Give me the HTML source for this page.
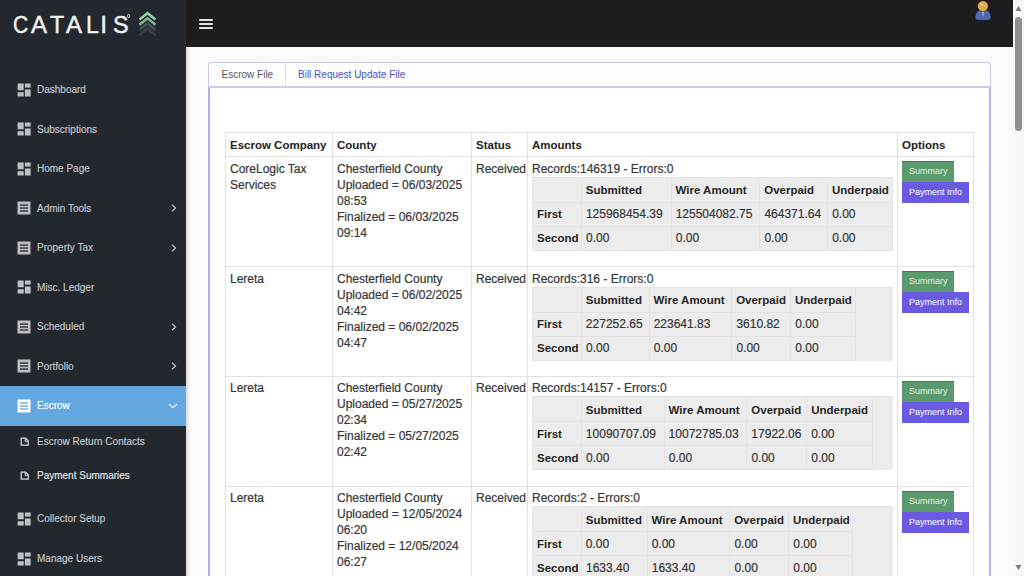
<!DOCTYPE html>
<html><head><meta charset="utf-8">
<style>
*{margin:0;padding:0;box-sizing:border-box}
html,body{width:1024px;height:576px;overflow:hidden;background:#fafafa;font-family:"Liberation Sans",sans-serif}
#side{position:absolute;left:0;top:0;width:186px;height:576px;background:#23282f;box-shadow:inset -2px 0 0 #272a30}
#top{position:absolute;left:186px;top:0;width:827px;height:47px;background:#1d1d20}
#sb{position:absolute;left:1013px;top:0;width:11px;height:576px;background:#f7f7f7}
.item{position:absolute;left:0;width:186px;height:40px;color:#c6c8cc;font-size:10px}
.item .t{position:absolute;left:37px;top:0.5px;line-height:40px;white-space:nowrap;-webkit-text-stroke:0.15px currentColor}
.item svg{position:absolute}
.active{background:#63a7e1;color:#fff}
#box{position:absolute;left:208px;top:62px;width:783px;height:600px}
#tabs{position:absolute;left:0;top:0;width:783px;height:26px;border:1.5px solid #cac6e6;border-bottom:2px solid #cfcbe6;border-radius:3px 3px 0 0;background:#fdfdfd}
#panel{position:absolute;left:0;top:26px;width:783px;height:600px;border-left:2px solid #b0b0f0;border-right:2px solid #b4b4ee;background:#fff}
.tab{position:absolute;top:0;height:23px;line-height:24px;font-size:10px;white-space:nowrap}
#tbl{position:absolute;left:225px;top:132px;width:749px;border-top:1px solid #e0e0e0;color:#363636;font-size:12px;line-height:16px;-webkit-text-stroke:0.2px #363636}
.row{display:flex;border-bottom:1px solid #e0e0e0}
.c{box-sizing:border-box;border-left:1px solid #e0e0e0;padding:3.5px 4px;white-space:nowrap}
.c5{border-right:1px solid #e0e0e0}
.hd .c{font-weight:bold;color:#222;font-size:11.5px;-webkit-text-stroke:0}
.gray{background:#ececec;height:74px;border-top:1px solid #e2e2e2;border-left:1px solid #e4e4e4}
.ir{display:flex;border-bottom:1px solid #e2e2e2}
.itb{border-right:1px solid #e4e4e4}
.ic{border-left:1px solid #e4e4e4;padding:0 4px;display:flex;align-items:flex-end;padding-bottom:3.5px;white-space:nowrap;overflow:visible}
.btn{display:block;height:21px;line-height:21px;font-size:9px;padding:0 7px;color:#fff;white-space:nowrap;-webkit-text-stroke:0}
.bs{background:#5a9a6c;width:52px;color:#e4f2e6;box-shadow:inset 0 1px 0 #3f7a4f}
.bp{background:#6a5ae2;width:67px}
</style></head><body>
<div id="side">
  <!-- logo -->
  <div id="logo" style="position:absolute;left:0;top:0;font-size:24.5px;line-height:24px;color:#f2f2f2"><span style="position:absolute;left:12.5px;top:13px;transform:scaleX(0.86);transform-origin:0 0;-webkit-text-stroke:0.45px #f2f2f2">C</span><span style="position:absolute;left:31.4px;top:13px;transform:scaleX(0.98);transform-origin:0 0;-webkit-text-stroke:0.45px #f2f2f2">A</span><span style="position:absolute;left:49.5px;top:13px;transform:scaleX(0.95);transform-origin:0 0;-webkit-text-stroke:0.45px #f2f2f2">T</span><span style="position:absolute;left:66.2px;top:13px;transform:scaleX(0.98);transform-origin:0 0;-webkit-text-stroke:0.45px #f2f2f2">A</span><span style="position:absolute;left:85.5px;top:13px;transform:scaleX(0.94);transform-origin:0 0;-webkit-text-stroke:0.45px #f2f2f2">L</span><span style="position:absolute;left:100.3px;top:13px;transform:scaleX(1);transform-origin:0 0;-webkit-text-stroke:0.45px #f2f2f2">I</span><span style="position:absolute;left:113px;top:13px;transform:scaleX(0.95);transform-origin:0 0;-webkit-text-stroke:0.45px #f2f2f2">S</span></div>
  <div style="position:absolute;left:126.5px;top:14px;width:3.5px;height:3.5px;border-radius:50%;border:1px solid #cfcfcf"></div>
  <svg style="position:absolute;left:136px;top:9px" width="24" height="30" viewBox="0 0 24 30"><polyline points="3.5,10.60 11.5,4.20 19.5,10.60" fill="none" stroke="#8fd2a8" stroke-width="2.5"/><polyline points="3.5,15.70 11.5,9.30 19.5,15.70" fill="none" stroke="#84b494" stroke-width="2.5"/><polyline points="3.5,20.80 11.5,14.40 19.5,20.80" fill="none" stroke="#485256" stroke-width="2.5"/><polyline points="3.5,25.90 11.5,19.50 19.5,25.90" fill="none" stroke="#3a4247" stroke-width="2.5"/></svg>
</div>
<div style="position:absolute;left:186px;top:47px;width:4px;height:529px;background:linear-gradient(to right,#dedede,#fafafa)"></div>
<div id="top">
  <div style="position:absolute;left:13px;top:19px;width:14px;height:2px;background:#e2e2e2;border-radius:1px"></div>
  <div style="position:absolute;left:13px;top:23px;width:14px;height:2px;background:#e2e2e2;border-radius:1px"></div>
  <div style="position:absolute;left:13px;top:26.5px;width:14px;height:2px;background:#e2e2e2;border-radius:1px"></div>
  <svg style="position:absolute;left:787px;top:0" width="20" height="22" viewBox="0 0 20 22">
    <path d="M2,17.5 Q2,9.5 10,9.5 Q18,9.5 18,17.5 Q18,20.3 15,20.3 L5,20.3 Q2,20.3 2,17.5Z" fill="#4b6ab0" stroke="#0b1220" stroke-width="0.6"/>
    <path d="M9.2,10 L10.8,10 L10.2,16 L9.8,16Z" fill="#dfe6f2"/>
    <circle cx="9.9" cy="6.1" r="5.4" fill="#e5ac4f" stroke="#0b0b0b" stroke-width="0.5"/>
    <ellipse cx="8.6" cy="4.6" rx="1.6" ry="0.9" fill="#f4d79c"/>
  </svg>
</div>
<div id="sb">
  <svg style="position:absolute;left:0;top:0" width="11" height="576">
    <path d="M2.5,11 L5.5,6 L8.5,11Z" fill="#7a7a7a"/>
    <rect x="2" y="17" width="7" height="114" rx="3.5" fill="#8f8f8f"/>
    <path d="M2.5,565 L5.5,570 L8.5,565Z" fill="#7a7a7a"/>
  </svg>
</div>
<div id="menu"><div class="item" style="top:69.5px"><svg style="left:17px;top:13px" width="14" height="14" viewBox="0 0 14 14" fill="#bdbfc3">
<rect x="0.6" y="0.5" width="6.1" height="6.8"/><rect x="0.6" y="9.2" width="6.1" height="4.3"/>
<rect x="7.9" y="0.5" width="5.8" height="4.1"/><rect x="7.9" y="6.5" width="5.8" height="7"/></svg><div class="t" style="color:#c6c8cc">Dashboard</div></div><div class="item" style="top:109px"><svg style="left:17px;top:13px" width="14" height="14" viewBox="0 0 14 14" fill="#bdbfc3">
<rect x="0.6" y="0.5" width="6.1" height="6.8"/><rect x="0.6" y="9.2" width="6.1" height="4.3"/>
<rect x="7.9" y="0.5" width="5.8" height="4.1"/><rect x="7.9" y="6.5" width="5.8" height="7"/></svg><div class="t" style="color:#c6c8cc">Subscriptions</div></div><div class="item" style="top:148.5px"><svg style="left:17px;top:13px" width="14" height="14" viewBox="0 0 14 14" fill="#bdbfc3">
<rect x="0.6" y="0.5" width="6.1" height="6.8"/><rect x="0.6" y="9.2" width="6.1" height="4.3"/>
<rect x="7.9" y="0.5" width="5.8" height="4.1"/><rect x="7.9" y="6.5" width="5.8" height="7"/></svg><div class="t" style="color:#c6c8cc">Home Page</div></div><div class="item" style="top:188px"><svg style="left:17px;top:13px" width="14" height="14" viewBox="0 0 14 14">
<rect x="0.5" y="0.5" width="13" height="13" fill="#bdbfc3"/>
<rect x="3" y="3.4" width="8" height="1.3" fill="#23282f"/><rect x="3" y="6.4" width="8" height="1.3" fill="#23282f"/><rect x="3" y="9.4" width="8" height="1.3" fill="#23282f"/></svg><svg style="left:171px;top:16px" width="6" height="8" viewBox="0 0 6 8"><path d="M1,0.8 L4.6,4 L1,7.2" fill="none" stroke="#bfc1c5" stroke-width="1.2"/></svg><div class="t" style="color:#c6c8cc">Admin Tools</div></div><div class="item" style="top:227.5px"><svg style="left:17px;top:13px" width="14" height="14" viewBox="0 0 14 14">
<rect x="0.5" y="0.5" width="13" height="13" fill="#bdbfc3"/>
<rect x="3" y="3.4" width="8" height="1.3" fill="#23282f"/><rect x="3" y="6.4" width="8" height="1.3" fill="#23282f"/><rect x="3" y="9.4" width="8" height="1.3" fill="#23282f"/></svg><svg style="left:171px;top:16px" width="6" height="8" viewBox="0 0 6 8"><path d="M1,0.8 L4.6,4 L1,7.2" fill="none" stroke="#bfc1c5" stroke-width="1.2"/></svg><div class="t" style="color:#c6c8cc">Property Tax</div></div><div class="item" style="top:267px"><svg style="left:17px;top:13px" width="14" height="14" viewBox="0 0 14 14" fill="#bdbfc3">
<rect x="0.6" y="0.5" width="6.1" height="6.8"/><rect x="0.6" y="9.2" width="6.1" height="4.3"/>
<rect x="7.9" y="0.5" width="5.8" height="4.1"/><rect x="7.9" y="6.5" width="5.8" height="7"/></svg><div class="t" style="color:#c6c8cc">Misc. Ledger</div></div><div class="item" style="top:306.5px"><svg style="left:17px;top:13px" width="14" height="14" viewBox="0 0 14 14">
<rect x="0.5" y="0.5" width="13" height="13" fill="#bdbfc3"/>
<rect x="3" y="3.4" width="8" height="1.3" fill="#23282f"/><rect x="3" y="6.4" width="8" height="1.3" fill="#23282f"/><rect x="3" y="9.4" width="8" height="1.3" fill="#23282f"/></svg><svg style="left:171px;top:16px" width="6" height="8" viewBox="0 0 6 8"><path d="M1,0.8 L4.6,4 L1,7.2" fill="none" stroke="#bfc1c5" stroke-width="1.2"/></svg><div class="t" style="color:#c6c8cc">Scheduled</div></div><div class="item" style="top:346px"><svg style="left:17px;top:13px" width="14" height="14" viewBox="0 0 14 14">
<rect x="0.5" y="0.5" width="13" height="13" fill="#bdbfc3"/>
<rect x="3" y="3.4" width="8" height="1.3" fill="#23282f"/><rect x="3" y="6.4" width="8" height="1.3" fill="#23282f"/><rect x="3" y="9.4" width="8" height="1.3" fill="#23282f"/></svg><svg style="left:171px;top:16px" width="6" height="8" viewBox="0 0 6 8"><path d="M1,0.8 L4.6,4 L1,7.2" fill="none" stroke="#bfc1c5" stroke-width="1.2"/></svg><div class="t" style="color:#c6c8cc">Portfolio</div></div><div class="item active" style="top:385.5px"><svg style="left:17px;top:13px" width="14" height="14" viewBox="0 0 14 14">
<rect x="0.5" y="0.5" width="13" height="13" fill="#ffffff"/>
<rect x="3" y="3.4" width="8" height="1.3" fill="#63a7e1"/><rect x="3" y="6.4" width="8" height="1.3" fill="#63a7e1"/><rect x="3" y="9.4" width="8" height="1.3" fill="#63a7e1"/></svg><svg style="left:168px;top:17px" width="10" height="6" viewBox="0 0 10 6"><path d="M1,1 L5,4.6 L9,1" fill="none" stroke="#e8f2fb" stroke-width="1.2"/></svg><div class="t" style="color:#ffffff">Escrow</div></div><div class="item" style="top:421.5px"><svg style="left:19.5px;top:15.5px" width="10" height="10" viewBox="0 0 10 10">
<path d="M1.2,1.2 L5.6,1.2 L8.2,3.8 L8.2,8.2 L1.2,8.2Z" fill="none" stroke="#d8d8d8" stroke-width="1.25"/><path d="M5.2,1.5 L5.2,4.3 L8,4.3" fill="none" stroke="#d8d8d8" stroke-width="1.1"/></svg><div class="t" style="color:#c6c8cc">Escrow Return Contacts</div></div><div class="item" style="top:455px"><svg style="left:19.5px;top:15.5px" width="10" height="10" viewBox="0 0 10 10">
<path d="M1.2,1.2 L5.6,1.2 L8.2,3.8 L8.2,8.2 L1.2,8.2Z" fill="none" stroke="#d8d8d8" stroke-width="1.25"/><path d="M5.2,1.5 L5.2,4.3 L8,4.3" fill="none" stroke="#d8d8d8" stroke-width="1.1"/></svg><div class="t" style="color:#e6e6e6">Payment Summaries</div></div><div class="item" style="top:498.5px"><svg style="left:17px;top:13px" width="14" height="14" viewBox="0 0 14 14" fill="#bdbfc3">
<rect x="0.6" y="0.5" width="6.1" height="6.8"/><rect x="0.6" y="9.2" width="6.1" height="4.3"/>
<rect x="7.9" y="0.5" width="5.8" height="4.1"/><rect x="7.9" y="6.5" width="5.8" height="7"/></svg><div class="t" style="color:#c6c8cc">Collector Setup</div></div><div class="item" style="top:538.5px"><svg style="left:17px;top:13px" width="14" height="14" viewBox="0 0 14 14" fill="#bdbfc3">
<rect x="0.6" y="0.5" width="6.1" height="6.8"/><rect x="0.6" y="9.2" width="6.1" height="4.3"/>
<rect x="7.9" y="0.5" width="5.8" height="4.1"/><rect x="7.9" y="6.5" width="5.8" height="7"/></svg><div class="t" style="color:#c6c8cc">Manage Users</div></div></div>

<div id="box">
  <div id="tabs">
    <div class="tab" style="left:0;width:77px;border-right:1px solid #e2e2ee;color:#585858;padding-left:12.5px">Escrow File</div>
    <div class="tab" style="left:89px;color:#4853c4">Bill Request Update File</div>
  </div>
  <div id="panel"></div>
</div>

<div id="tbl"><div class="row hd" style="height:24px"><div class="c" style="width:107px;">Escrow Company</div><div class="c" style="width:139px;">County</div><div class="c" style="width:56px;">Status</div><div class="c" style="width:370px;">Amounts</div><div class="c c5" style="width:77px;">Options</div></div><div class="row" style="height:110px"><div class="c" style="width:107px;">CoreLogic Tax<br>Services</div><div class="c" style="width:139px;">Chesterfield County<br>Uploaded = 06/03/2025<br>08:53<br>Finalized = 06/03/2025<br>09:14</div><div class="c" style="width:56px;">Received</div><div class="c" style="width:370px;">Records:146319 - Errors:0<div class="gray"><div class="itb" style="width:360px"><div class="ir" style="height:25px"><div class="ic" style="width:48px;font-weight:bold;color:#262626;font-size:11.5px;-webkit-text-stroke:0;border-left:none;"></div><div class="ic" style="width:90px;font-weight:bold;color:#262626;font-size:11.5px;-webkit-text-stroke:0;">Submitted</div><div class="ic" style="width:89px;font-weight:bold;color:#262626;font-size:11.5px;-webkit-text-stroke:0;">Wire Amount</div><div class="ic" style="width:68px;font-weight:bold;color:#262626;font-size:11.5px;-webkit-text-stroke:0;">Overpaid</div><div class="ic" style="width:65px;font-weight:bold;color:#262626;font-size:11.5px;-webkit-text-stroke:0;">Underpaid</div></div><div class="ir" style="height:24px"><div class="ic" style="width:48px;font-weight:bold;color:#262626;font-size:11.5px;-webkit-text-stroke:0;border-left:none;">First</div><div class="ic" style="width:90px;">125968454.39</div><div class="ic" style="width:89px;">125504082.75</div><div class="ic" style="width:68px;">464371.64</div><div class="ic" style="width:65px;">0.00</div></div><div class="ir" style="height:24px"><div class="ic" style="width:48px;font-weight:bold;color:#262626;font-size:11.5px;-webkit-text-stroke:0;border-left:none;">Second</div><div class="ic" style="width:90px;">0.00</div><div class="ic" style="width:89px;">0.00</div><div class="ic" style="width:68px;">0.00</div><div class="ic" style="width:65px;">0.00</div></div></div></div></div><div class="c c5" style="width:77px;padding-top:4px"><span class="btn bs">Summary</span><span class="btn bp">Payment Info</span></div></div><div class="row" style="height:109.75px"><div class="c" style="width:107px;">Lereta</div><div class="c" style="width:139px;">Chesterfield County<br>Uploaded = 06/02/2025<br>04:42<br>Finalized = 06/02/2025<br>04:47</div><div class="c" style="width:56px;">Received</div><div class="c" style="width:370px;">Records:316 - Errors:0<div class="gray"><div class="itb" style="width:323px"><div class="ir" style="height:25px"><div class="ic" style="width:48px;font-weight:bold;color:#262626;font-size:11.5px;-webkit-text-stroke:0;border-left:none;"></div><div class="ic" style="width:68px;font-weight:bold;color:#262626;font-size:11.5px;-webkit-text-stroke:0;">Submitted</div><div class="ic" style="width:83px;font-weight:bold;color:#262626;font-size:11.5px;-webkit-text-stroke:0;">Wire Amount</div><div class="ic" style="width:59px;font-weight:bold;color:#262626;font-size:11.5px;-webkit-text-stroke:0;">Overpaid</div><div class="ic" style="width:65px;font-weight:bold;color:#262626;font-size:11.5px;-webkit-text-stroke:0;">Underpaid</div></div><div class="ir" style="height:24px"><div class="ic" style="width:48px;font-weight:bold;color:#262626;font-size:11.5px;-webkit-text-stroke:0;border-left:none;">First</div><div class="ic" style="width:68px;">227252.65</div><div class="ic" style="width:83px;">223641.83</div><div class="ic" style="width:59px;">3610.82</div><div class="ic" style="width:65px;">0.00</div></div><div class="ir" style="height:24px"><div class="ic" style="width:48px;font-weight:bold;color:#262626;font-size:11.5px;-webkit-text-stroke:0;border-left:none;">Second</div><div class="ic" style="width:68px;">0.00</div><div class="ic" style="width:83px;">0.00</div><div class="ic" style="width:59px;">0.00</div><div class="ic" style="width:65px;">0.00</div></div></div></div></div><div class="c c5" style="width:77px;padding-top:4px"><span class="btn bs">Summary</span><span class="btn bp">Payment Info</span></div></div><div class="row" style="height:109.75px"><div class="c" style="width:107px;">Lereta</div><div class="c" style="width:139px;">Chesterfield County<br>Uploaded = 05/27/2025<br>02:34<br>Finalized = 05/27/2025<br>02:42</div><div class="c" style="width:56px;">Received</div><div class="c" style="width:370px;">Records:14157 - Errors:0<div class="gray"><div class="itb" style="width:340px"><div class="ir" style="height:25px"><div class="ic" style="width:48px;font-weight:bold;color:#262626;font-size:11.5px;-webkit-text-stroke:0;border-left:none;"></div><div class="ic" style="width:83px;font-weight:bold;color:#262626;font-size:11.5px;-webkit-text-stroke:0;">Submitted</div><div class="ic" style="width:83px;font-weight:bold;color:#262626;font-size:11.5px;-webkit-text-stroke:0;">Wire Amount</div><div class="ic" style="width:60px;font-weight:bold;color:#262626;font-size:11.5px;-webkit-text-stroke:0;">Overpaid</div><div class="ic" style="width:66px;font-weight:bold;color:#262626;font-size:11.5px;-webkit-text-stroke:0;">Underpaid</div></div><div class="ir" style="height:24px"><div class="ic" style="width:48px;font-weight:bold;color:#262626;font-size:11.5px;-webkit-text-stroke:0;border-left:none;">First</div><div class="ic" style="width:83px;">10090707.09</div><div class="ic" style="width:83px;">10072785.03</div><div class="ic" style="width:60px;">17922.06</div><div class="ic" style="width:66px;">0.00</div></div><div class="ir" style="height:24px"><div class="ic" style="width:48px;font-weight:bold;color:#262626;font-size:11.5px;-webkit-text-stroke:0;border-left:none;">Second</div><div class="ic" style="width:83px;">0.00</div><div class="ic" style="width:83px;">0.00</div><div class="ic" style="width:60px;">0.00</div><div class="ic" style="width:66px;">0.00</div></div></div></div></div><div class="c c5" style="width:77px;padding-top:4px"><span class="btn bs">Summary</span><span class="btn bp">Payment Info</span></div></div><div class="row" style="height:109.75px"><div class="c" style="width:107px;">Lereta</div><div class="c" style="width:139px;">Chesterfield County<br>Uploaded = 12/05/2024<br>06:20<br>Finalized = 12/05/2024<br>06:27</div><div class="c" style="width:56px;">Received</div><div class="c" style="width:370px;">Records:2 - Errors:0<div class="gray"><div class="itb" style="width:320px"><div class="ir" style="height:25px"><div class="ic" style="width:48px;font-weight:bold;color:#262626;font-size:11.5px;-webkit-text-stroke:0;border-left:none;"></div><div class="ic" style="width:66px;font-weight:bold;color:#262626;font-size:11.5px;-webkit-text-stroke:0;">Submitted</div><div class="ic" style="width:83px;font-weight:bold;color:#262626;font-size:11.5px;-webkit-text-stroke:0;">Wire Amount</div><div class="ic" style="width:59px;font-weight:bold;color:#262626;font-size:11.5px;-webkit-text-stroke:0;">Overpaid</div><div class="ic" style="width:64px;font-weight:bold;color:#262626;font-size:11.5px;-webkit-text-stroke:0;">Underpaid</div></div><div class="ir" style="height:24px"><div class="ic" style="width:48px;font-weight:bold;color:#262626;font-size:11.5px;-webkit-text-stroke:0;border-left:none;">First</div><div class="ic" style="width:66px;">0.00</div><div class="ic" style="width:83px;">0.00</div><div class="ic" style="width:59px;">0.00</div><div class="ic" style="width:64px;">0.00</div></div><div class="ir" style="height:24px"><div class="ic" style="width:48px;font-weight:bold;color:#262626;font-size:11.5px;-webkit-text-stroke:0;border-left:none;">Second</div><div class="ic" style="width:66px;">1633.40</div><div class="ic" style="width:83px;">1633.40</div><div class="ic" style="width:59px;">0.00</div><div class="ic" style="width:64px;">0.00</div></div></div></div></div><div class="c c5" style="width:77px;padding-top:4px"><span class="btn bs">Summary</span><span class="btn bp">Payment Info</span></div></div></div>
</body></html>
